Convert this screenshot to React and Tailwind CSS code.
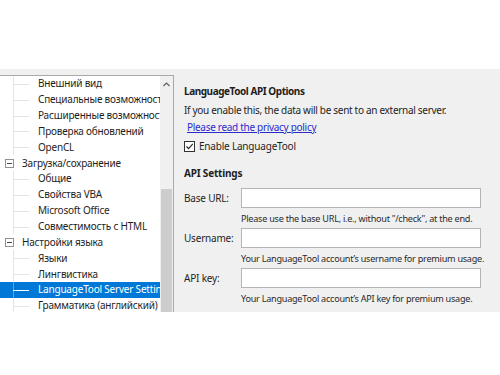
import React from "react";

const font = { fontFamily: '"Noto Sans", "Open Sans", sans-serif' };

const treeItems = [
  { label: "Внешний вид", level: 1 },
  { label: "Специальные возможности", level: 1 },
  { label: "Расширенные возможности", level: 1 },
  { label: "Проверка обновлений", level: 1 },
  { label: "OpenCL", level: 1 },
  { label: "Загрузка/сохранение", level: 0 },
  { label: "Общие", level: 1 },
  { label: "Свойства VBA", level: 1 },
  { label: "Microsoft Office", level: 1 },
  { label: "Совместимость с HTML", level: 1 },
  { label: "Настройки языка", level: 0 },
  { label: "Языки", level: 1 },
  { label: "Лингвистика", level: 1 },
  { label: "LanguageTool Server Settings", level: 1, selected: true },
  { label: "Грамматика (английский)", level: 1 },
];

function TreeRow({ item }) {
  if (item.level === 0) {
    return (
      <div className="relative flex h-[15.85px] items-center whitespace-nowrap">
        <span className="ml-[5px] flex h-[9px] w-[9px] items-center justify-center border border-[#919191] bg-white">
          <span className="h-px w-[5px] bg-[#4a4a4a]" />
        </span>
        <span className="ml-[8px] text-[#1e1e1e]">{item.label}</span>
      </div>
    );
  }
  return (
    <div
      className={
        "relative flex h-[15.85px] items-center whitespace-nowrap " +
        (item.selected ? "bg-[#0078d7] text-white" : "text-[#1e1e1e]")
      }
    >
      <span
        className={
          "absolute left-[13px] top-0 h-full w-px " +
          (item.selected ? "bg-[#5aa4e6]" : "bg-[#e4e4e4]")
        }
      />
      <span
        className={
          "absolute left-[13px] top-1/2 h-px w-[16px] " +
          (item.selected ? "bg-white" : "bg-[#e4e4e4]")
        }
      />
      <span className="ml-[38px]">{item.label}</span>
    </div>
  );
}

function Field({ label, hint }) {
  return (
    <>
      <div className="flex h-[20px] items-center whitespace-nowrap">
        <span className="w-[57px]">{label}</span>
        <div className="h-[20px] w-[240px] border border-[#b4b4b4] bg-white" />
      </div>
      <div className="mb-[1px] ml-[57px] mt-[3px] h-[16px] whitespace-nowrap text-[9.1px] leading-[16px] tracking-[-0.25px] text-[#2a2a2a]">
        {hint}
      </div>
    </>
  );
}

export default function App() {
  return (
    <div
      className="flex h-[375px] w-[500px] flex-col bg-white text-[10px] tracking-[-0.2px]"
      style={font}
    >
      <div className="h-[69px] shrink-0 bg-white" />
      <div className="flex h-[243px] shrink-0 bg-[#f0f0f0]">
        <div className="w-[174px] shrink-0 pt-[6px]">
          <div className="flex h-full border-r border-t border-[#a9a9a9]">
            <div className="w-[160px] overflow-hidden bg-white">
              {treeItems.map((item) => (
                <TreeRow key={item.label} item={item} />
              ))}
            </div>
            <div className="flex w-[13px] flex-col bg-[#f0f0f0]">
              <div className="flex h-[16px] items-center justify-center">
                <svg width="7" height="5" viewBox="0 0 7 5">
                  <path d="M0.5 4 L3.5 1 L6.5 4" fill="none" stroke="#606060" strokeWidth="1.2" />
                </svg>
              </div>
              <div className="h-[97px]" />
              <div className="mx-[1px] flex-1 bg-[#cdcdcd]" />
            </div>
          </div>
        </div>
        <div className="flex-1 whitespace-nowrap pl-[10px] pt-[14px] text-[#1e1e1e]">
          <div className="h-[16px] font-bold leading-[16px] tracking-[-0.45px]">LanguageTool API Options</div>
          <div className="mt-[2px] h-[18px] leading-[18px] tracking-[-0.3px]">
            If you enable this, the data will be sent to an external server.
          </div>
          <div className="h-[18px] pl-[3px] leading-[17px] tracking-[-0.3px]">
            <span className="text-[#2b2bcc] underline">Please read the privacy policy</span>
          </div>
          <div className="flex h-[18px] items-center">
            <span className="flex h-[11px] w-[11px] items-center justify-center border border-[#333] bg-white">
              <svg width="9" height="9" viewBox="0 0 9 9">
                <path d="M1.5 4.5 L3.6 6.7 L7.8 1.8" fill="none" stroke="#222" strokeWidth="1.1" />
              </svg>
            </span>
            <span className="ml-[4px]">Enable LanguageTool</span>
          </div>
          <div className="mt-[10px] h-[16px] font-bold leading-[16px]">API Settings</div>
          <div className="mt-[7px]">
            <Field label="Base URL:" hint={"Please use the base URL, i.e., without \"/check\", at the end."} />
            <Field label="Username:" hint={"Your LanguageTool account\u2019s username for premium usage."} />
            <Field label="API key:" hint={"Your LanguageTool account\u2019s API key for premium usage."} />
          </div>
        </div>
      </div>
      <div className="flex-1 bg-white" />
    </div>
  );
}
